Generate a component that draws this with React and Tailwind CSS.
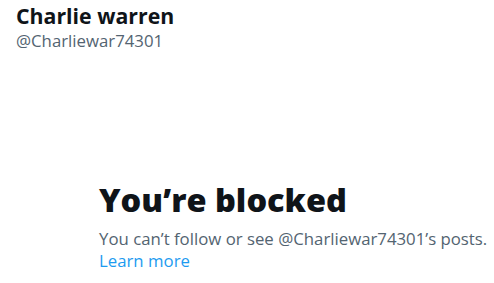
export default function App() {
  return (
    <div className="w-[494px] h-[283px] bg-white overflow-hidden font-['Open_Sans',sans-serif]">
      <div className="px-4 pt-[2px]">
        <div className="text-[21.3px] leading-[28px] font-bold text-[#0f1419]">Charlie warren</div>
        <div className="text-[16.8px] leading-[22px] text-[#536471]">@Charliewar74301</div>
      </div>
      <div className="pl-[99px] pt-[128px]">
        <div className="text-[32.5px] leading-[40px] font-extrabold text-[#0f1419]">You’re blocked</div>
        <div className="mt-[8px] text-[16.8px] leading-[22px] text-[#536471]">
          You can’t follow or see @Charliewar74301’s posts.
        </div>
        <div className="text-[16.8px] leading-[22px] text-[#1d9bf0]">Learn more</div>
      </div>
    </div>
  );
}
